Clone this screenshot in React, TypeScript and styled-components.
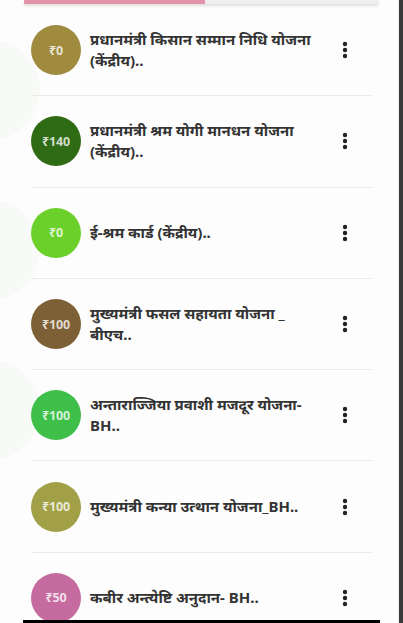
import React from "react";
import styled, { createGlobalStyle } from "styled-components";

const Global = createGlobalStyle`
  html, body { margin: 0; padding: 0; background: #fdfdfd; }
  body { font-family: "Noto Sans", "Noto Sans Devanagari", sans-serif; }
`;

const Screen = styled.div`
  width: 403px;
  height: 623px;
  display: flex;
  overflow: hidden;
  background: #fdfdfd;
  position: relative;
`;

const Backdrop = styled.div`
  position: absolute;
  left: -60px;
  width: 100px;
  height: 100px;
  border-radius: 50%;
  background: rgba(228, 236, 222, 0.18);
  pointer-events: none;
`;

const Main = styled.div`
  flex: 1;
  display: flex;
  flex-direction: column;
  padding-left: 24px;
  padding-right: 25px;
  position: relative;
`;

const Edge = styled.div`
  width: 4px;
  border-left: 1px solid #ececec;
  margin-left: 1px;
  display: flex;
  justify-content: flex-end;
`;

const EdgeBar = styled.div`
  width: 4px;
  background: #3a3a3a;
`;

const Progress = styled.div`
  height: 4px;
  display: flex;
  margin-right: -7px;
  border-radius: 0 0 6px 0;
  background: #eeeeee;
  box-shadow: 0 2px 3px rgba(0, 0, 0, 0.12);
  overflow: hidden;
  flex-shrink: 0;
`;

const ProgressFill = styled.div`
  height: 100%;
  background: #e493ab;
`;

const List = styled.div`
  flex: 1;
  overflow: hidden;
  padding-left: 7px;
  padding-top: 1px;
`;

const Row = styled.div`
  height: 90.3px;
  display: flex;
  align-items: center;
  border-bottom: 1px solid #ebebeb;
  margin-left: 1px;
`;

const Badge = styled.div<{ $bg: string }>`
  width: 50px;
  height: 50px;
  flex-shrink: 0;
  margin-left: -1px;
  border-radius: 50%;
  background: ${(p) => p.$bg};
  display: flex;
  align-items: center;
  justify-content: center;
  color: rgba(255, 255, 255, 0.78);
  font-family: "Noto Sans", Roboto, sans-serif;
  font-weight: 700;
  font-size: 12.5px;
  letter-spacing: -0.2px;
`;

const Title = styled.div`
  flex: 1;
  margin-left: 9px;
  color: #333333;
  font-family: "Noto Sans", "Noto Sans Devanagari", sans-serif;
  font-weight: 700;
  font-size: 15px;
  line-height: 21px;
  min-width: 0;
`;

const Line = styled.div`
  white-space: nowrap;
`;

const Menu = styled.div`
  width: 20px;
  display: flex;
  justify-content: center;
  margin-right: 17px;
  color: #222;
`;

const BottomBar = styled.div`
  height: 3px;
  background: #000;
  margin-left: -1px;
  margin-right: -8px;
  flex-shrink: 0;
`;

const Kebab = () => (
  <svg width="6" height="18" viewBox="0 0 6 18">
    <circle cx="3" cy="3" r="2.2" fill="currentColor" />
    <circle cx="3" cy="9" r="2.2" fill="currentColor" />
    <circle cx="3" cy="15" r="2.2" fill="currentColor" />
  </svg>
);

const items = [
  { amt: "₹0", bg: "#a08a3e", lines: ["प्रधानमंत्री किसान सम्मान निधि योजना", "(केंद्रीय).."] },
  { amt: "₹140", bg: "#2f6a14", lines: ["प्रधानमंत्री श्रम योगी मानधन योजना", "(केंद्रीय).."] },
  { amt: "₹0", bg: "#6cd02a", lines: ["ई-श्रम कार्ड (केंद्रीय).."] },
  { amt: "₹100", bg: "#7e6036", lines: ["मुख्यमंत्री फसल सहायता योजना _", "बीएच.."] },
  { amt: "₹100", bg: "#3dbf4a", lines: ["अन्ताराज्जिया प्रवाशी मजदूर योजना-", "BH.."] },
  { amt: "₹100", bg: "#a2a046", lines: ["मुख्यमंत्री कन्या उत्थान योजना_BH.."] },
  { amt: "₹50", bg: "#c56b9f", lines: ["कबीर अन्त्येष्टि अनुदान- BH.."] },
];

export default function App() {
  return (
    <>
      <Global />
      <Screen>
        <Backdrop style={{ top: 40 }} />
        <Backdrop style={{ top: 200 }} />
        <Backdrop style={{ top: 360 }} />
        <Main>
          <Progress>
            <ProgressFill style={{ width: "51%" }} />
          </Progress>
          <List>
            {items.map((it, i) => (
              <Row key={i}>
                <Badge $bg={it.bg}>{it.amt}</Badge>
                <Title>
                  {it.lines.map((l, j) => (
                    <Line key={j}>{l}</Line>
                  ))}
                </Title>
                <Menu>
                  <Kebab />
                </Menu>
              </Row>
            ))}
          </List>
          <BottomBar />
        </Main>
        <Edge>
          <EdgeBar />
        </Edge>
      </Screen>
    </>
  );
}
